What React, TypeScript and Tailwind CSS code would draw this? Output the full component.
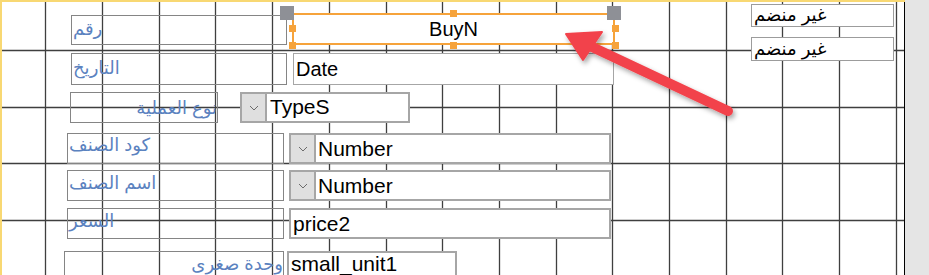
import React from "react";

const xs = [45, 102, 159, 215, 272, 329, 386, 442, 499, 556, 612, 669, 726, 782, 839, 896];
const ys = [50, 107, 163, 220];

function Grid() {
  return (
    <svg className="absolute left-0 top-0" width="905" height="275">
      {xs.map((x) => (
        <line key={"v" + x} x1={x + 0.5} y1={0} x2={x + 0.5} y2={275} stroke="#3f3f3f" strokeWidth={1.3} />
      ))}
      {ys.map((y) => (
        <line key={"h" + y} x1={0} y1={y + 0.5} x2={905} y2={y + 0.5} stroke="#3f3f3f" strokeWidth={1.3} />
      ))}
    </svg>
  );
}

function Chevron() {
  return (
    <svg width="10" height="6" viewBox="0 0 10 6">
      <path d="M1 1 L5 5 L9 1" fill="none" stroke="#6b6b6b" strokeWidth="1" />
    </svg>
  );
}

function DropButton() {
  return (
    <div className="w-[25px] shrink-0 bg-[#dfdfdf] border-r-2 border-[#a6a6a6] flex items-center justify-center">
      <Chevron />
    </div>
  );
}

function Arrow() {
  return (
    <svg className="absolute left-0 top-0 pointer-events-none" width="929" height="275">
      <defs>
        <filter id="sh" x="-20%" y="-20%" width="140%" height="140%">
          <feDropShadow dx="2" dy="3" stdDeviation="2.5" floodColor="#000" floodOpacity="0.35" />
        </filter>
      </defs>
      <g filter="url(#sh)">
        <line x1="590" y1="46" x2="728" y2="111" stroke="#f2434b" strokeWidth="10" strokeLinecap="round" />
        <polygon points="566,34 602,32 583,60" fill="#f2434b" strokeLinejoin="round" stroke="#f2434b" strokeWidth="2" />
      </g>
    </svg>
  );
}

// selected control with its sizing handles around it
function Selected() {
  return (
    <div className="absolute left-[292px] top-[13px] w-[323px] h-[32px]">
      <div className="w-full h-full border-2 border-[#f6a33b] bg-white flex items-center justify-center text-[20px] leading-none text-black">BuyN</div>
      <div className="absolute -left-[12px] -top-[7px] w-[14px] h-[14px] bg-[#8e9096]" />
      <div className="absolute left-[315px] -top-[7px] w-[14px] h-[14px] bg-[#8e9096]" />
      <div className="absolute -left-[3px] top-[12px] w-[7px] h-[7px] bg-[#f6a33b]" />
      <div className="absolute -left-[3px] top-[29px] w-[7px] h-[7px] bg-[#f6a33b]" />
      <div className="absolute left-[158px] -top-[3px] w-[7px] h-[7px] bg-[#f6a33b]" />
      <div className="absolute left-[158px] top-[29px] w-[7px] h-[7px] bg-[#f6a33b]" />
      <div className="absolute left-[320px] top-[12px] w-[7px] h-[7px] bg-[#f6a33b]" />
      <div className="absolute left-[320px] top-[29px] w-[7px] h-[7px] bg-[#f6a33b]" />
    </div>
  );
}

export default function App() {
  const arabic = { fontFamily: '"Liberation Sans", "DejaVu Sans", sans-serif' };
  return (
    <div className="relative w-[929px] h-[275px] overflow-hidden bg-white font-['Liberation_Sans',Arial,sans-serif]">
      <Grid />
      {/* form edge */}
      <div className="absolute left-[904px] top-0 w-[1.5px] h-full bg-black" />
      <div className="absolute left-[905px] top-0 w-[24px] h-full bg-[#e5e5e5]" />
      <div className="absolute left-0 top-0 w-[905px] h-[2px] bg-[#f8d873]" />
      <div className="absolute left-0 top-0 w-[1.5px] h-full bg-[#f8d873]" />

      {/* labels */}
      <div dir="rtl" style={arabic} className="absolute left-[71px] top-[15px] w-[216px] h-[30px] border border-[#858585] text-left text-[18px] leading-none pt-[4px] pl-[1px] text-[#5b82bf]">رقم</div>
      <div dir="rtl" style={arabic} className="absolute left-[71px] top-[53px] w-[216px] h-[32px] border border-[#858585] text-left text-[18px] leading-none pt-[5px] pl-[1px] text-[#5b82bf]">التاريخ</div>
      <div dir="rtl" style={arabic} className="absolute left-[70px] top-[92px] w-[148px] h-[31px] border border-[#858585] text-right text-[18px] leading-none pt-[6px] text-[#5b82bf] whitespace-nowrap">نوع العملية</div>
      <div dir="rtl" style={arabic} className="absolute left-[67px] top-[133px] w-[217px] h-[31px] border border-[#858585] text-left text-[18px] leading-none pt-[2px] pl-[1px] text-[#5b82bf]">كود الصنف</div>
      <div dir="rtl" style={arabic} className="absolute left-[67px] top-[170px] w-[217px] h-[31px] border border-[#858585] text-left text-[18px] leading-none pt-[3px] pl-[1px] text-[#5b82bf]">اسم الصنف</div>
      <div dir="rtl" style={arabic} className="absolute left-[67px] top-[208px] w-[217px] h-[31px] border border-[#858585] text-left text-[18px] leading-none pt-[3px] pl-[1px] text-[#5b82bf]">السعر</div>
      <div dir="rtl" style={arabic} className="absolute left-[64px] top-[251px] w-[220px] h-[40px] border border-[#858585] text-right text-[18px] leading-none pt-[3px] text-[#5b82bf] whitespace-nowrap">وحدة صغرى</div>

      {/* text boxes */}
      <div className="absolute left-[293px] top-[53px] w-[321px] h-[32px] border border-[#a6a6a6] bg-white text-[20px] leading-none pt-[5px] pl-[2px] text-black">Date</div>
      <div className="absolute left-[289px] top-[208px] w-[322px] h-[31px] border-2 border-[#a6a6a6] bg-white text-[21px] leading-none pt-[3px] pl-[2px] text-black">price2</div>
      <div className="absolute left-[287px] top-[251px] w-[170px] h-[40px] border-2 border-[#a6a6a6] bg-white text-[21px] leading-none pl-[2px] text-black">small_unit1</div>

      {/* combos */}
      <div className="absolute left-[240px] top-[92px] w-[170px] h-[31px] border-2 border-[#a6a6a6] bg-white flex items-stretch">
        <DropButton />
        <div className="pl-[3px] text-[21px] leading-none pt-[2px] text-black">TypeS</div>
      </div>
      <div className="absolute left-[289px] top-[133px] w-[322px] h-[31px] border-2 border-[#a6a6a6] bg-white flex items-stretch">
        <DropButton />
        <div className="pl-[2px] text-[21px] leading-none pt-[3px] text-black">Number</div>
      </div>
      <div className="absolute left-[289px] top-[170px] w-[322px] h-[31px] border-2 border-[#a6a6a6] bg-white flex items-stretch">
        <DropButton />
        <div className="pl-[2px] text-[21px] leading-none pt-[3px] text-black">Number</div>
      </div>

      {/* unbound */}
      <div className="absolute left-[751px] top-[4px] w-[143px] flex flex-col gap-[10px]">
        <div dir="rtl" style={arabic} className="h-[23px] border border-[#9c9c9c] bg-white text-left text-[18px] leading-none pt-[1px] pl-[2px] text-black">غير منضم</div>
        <div dir="rtl" style={arabic} className="h-[24px] border border-[#9c9c9c] bg-white text-left text-[18px] leading-none pt-[2px] pl-[2px] text-black">غير منضم</div>
      </div>

      <Selected />
      <Arrow />
    </div>
  );
}
